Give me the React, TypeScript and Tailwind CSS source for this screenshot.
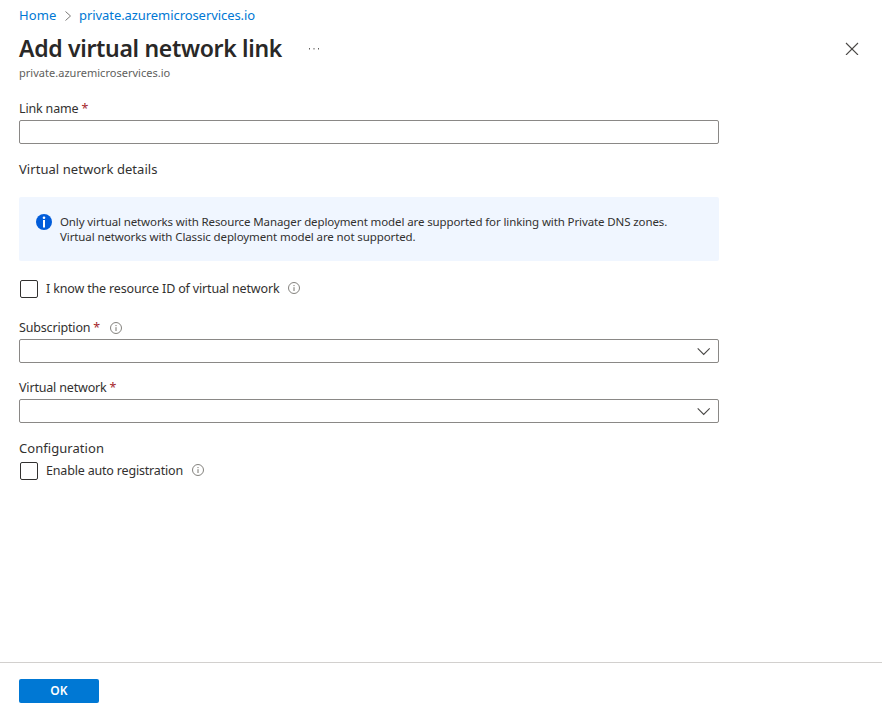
import { ReactNode } from "react";

function InfoIcon() {
  return (
    <svg className="block h-3 w-3 shrink-0" viewBox="0 0 12 12" fill="none">
      <circle cx="6" cy="6" r="5.5" stroke="#76746f" strokeWidth="0.9" />
      <path d="M6 5.2V9" stroke="#76746f" />
      <path d="M6 3V4.1" stroke="#76746f" />
    </svg>
  );
}

function Label({ children, className }: { children: ReactNode; className: string }) {
  return (
    <div className={`flex items-start whitespace-pre pt-px text-[12.5px] leading-5 tracking-[-0.17px] ${className}`}>{children}</div>
  );
}

function Required() {
  return <span className="ml-[3px] text-[#a4262c]">*</span>;
}

function Select() {
  return (
    <button className="flex h-6 w-[700px] items-center justify-end rounded-[2px] border border-[#8a8886] bg-white pr-[7px]">
      <svg className="block h-[14px] w-[14px]" viewBox="0 0 14 14" fill="none">
        <path d="M0.7 4.4L6.7 10.4L12.7 4.4" stroke="#4a4846" strokeWidth="1.1" />
      </svg>
    </button>
  );
}

function CheckRow({ children }: { children: ReactNode }) {
  return (
    <div className="ml-px flex h-[18px] items-start text-[12.5px] leading-[18px]">
      <span className="h-[18px] w-[18px] shrink-0 rounded-[2px] border border-[#323130] bg-white" />
      {children}
    </div>
  );
}

export default function App() {
  return (
    <div className="flex h-[713px] w-[882px] flex-col overflow-hidden bg-white font-['Noto_Sans','Open_Sans',sans-serif] text-[#323130]">
      <nav className="flex h-[31px] items-center whitespace-nowrap pl-[19px] text-[13px] text-[#0078d4]">
        <span className="w-[38px] tracking-[0.1px]">Home</span>
        <svg className="ml-[7px] mr-[6px] block h-3 w-[9px]" viewBox="0 0 9 12" fill="none">
          <path d="M1.5 1.5L6.5 6L1.5 10.5" stroke="#7a7876" />
        </svg>
        <span className="tracking-[-0.07px]">private.azuremicroservices.io</span>
      </nav>

      <header className="flex h-[34px] items-center pl-[19px] pr-[23px]">
        <h1 className="w-[289px] whitespace-nowrap text-[23px] font-semibold leading-8 tracking-[-0.32px] text-[#292827]">Add virtual network link</h1>
        <svg className="mt-px block h-2 w-3" viewBox="0 0 12 8" fill="#605e5c">
          <rect x="1" y="3" width="1" height="1.5" />
          <rect x="5.5" y="3" width="1" height="1.5" />
          <rect x="10" y="3" width="1" height="1.5" />
        </svg>
        <svg className="ml-auto block h-[14px] w-[14px]" viewBox="0 0 14 14" fill="none">
          <path d="M1 2L13 14M13 2L1 14" stroke="#4a4846" strokeWidth="1.1" />
        </svg>
      </header>
      <p className="h-[33px] whitespace-nowrap pl-[19px] text-[11px] leading-4 tracking-[0.02px] text-[#605e5c]">private.azuremicroservices.io</p>

      <main className="flex flex-1 flex-col pl-[19px]">
        <Label className="h-[22px]">Link name<Required /></Label>
        <input className="block h-6 w-[700px] rounded-[2px] border border-[#8a8886] bg-white outline-none" />
        <h2 className="mt-[15px] h-[38px] whitespace-nowrap text-[13px] leading-5 tracking-[0.05px]">Virtual network details</h2>

        <section className="flex h-16 w-[700px] rounded-[2px] bg-[#f0f6ff] pl-[17px] pt-[17px]">
          <svg className="block h-4 w-4 shrink-0" viewBox="0 0 16 16">
            <circle cx="8" cy="8" r="8" fill="#015cda" />
            <rect x="7" y="6" width="2" height="7.5" fill="white" />
            <circle cx="8" cy="3.7" r="1.3" fill="white" />
          </svg>
          <div className="ml-2 whitespace-nowrap text-[11.5px] leading-[15px] tracking-[-0.11px]">
            <p>Only virtual networks with Resource Manager deployment model are supported for linking with Private DNS zones.</p>
            <p>Virtual networks with Classic deployment model are not supported.</p>
          </div>
        </section>

        <div className="mt-[19px]">
          <CheckRow>
            <span className="ml-2 w-[242px] whitespace-nowrap tracking-[-0.16px]">I know the resource ID of virtual network</span>
            <span className="mt-0.5"><InfoIcon /></span>
          </CheckRow>
        </div>

        <Label className="mt-[19px] h-[22px]">Subscription<Required /><span className="ml-[10px] mt-1"><InfoIcon /></span></Label>
        <Select />
        <Label className="mt-[14px] h-[22px]">Virtual network<Required /></Label>
        <Select />

        <h2 className="mt-[15px] h-6 whitespace-nowrap text-[13px] leading-5 tracking-[0.05px]">Configuration</h2>
        <CheckRow>
          <span className="ml-2 w-[146px] whitespace-nowrap tracking-[-0.18px]">Enable auto registration</span>
          <span className="mt-0.5"><InfoIcon /></span>
        </CheckRow>
      </main>

      <footer className="flex h-[51px] border-t border-[#d2d0ce] pl-[19px] pt-4">
        <button className="h-6 w-20 rounded-[2px] bg-[#0078d4] text-[12px] font-semibold tracking-[0.2px] text-white">OK</button>
      </footer>
    </div>
  );
}
